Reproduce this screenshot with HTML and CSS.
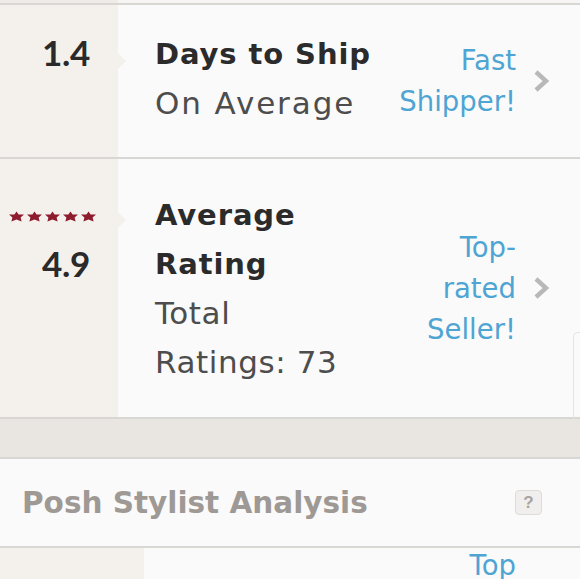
FILE: index.html
```html
<!DOCTYPE html>
<html>
<head>
<meta charset="utf-8">
<link rel="stylesheet" href="styles.css">
</head>
<body>
<div class="page">
  <div class="topstrip"><div class="topstrip-left"></div></div>

  <div class="row row-ship">
    <div class="left">
      <div class="big">1.4</div>
    </div>
    <div class="main">
      <div class="title">Days to Ship</div>
      <div class="sub sub-wide">On Average</div>
    </div>
    <div class="right">
      <div class="badge">Fast<br>Shipper!</div>
      <svg class="chev" width="18" height="24" viewBox="0 0 18 24"><polyline points="3,3 13,12 3,21" fill="none" stroke="#b8b8b8" stroke-width="4.4"/></svg>
    </div>
  </div>

  <div class="row row-rating">
    <div class="left">
      <div class="stars">
        <svg width="88" height="11" viewBox="0 0 88 11">
          <g fill="#8e1b2e">
            <polygon points="7.5,0.5 9.6,3.6 15,3.6 11.6,6.4 12.6,10.5 7.5,8.6 2.4,10.5 3.4,6.4 0,3.6 5.4,3.6"/>
            <polygon transform="translate(18,0)" points="7.5,0.5 9.6,3.6 15,3.6 11.6,6.4 12.6,10.5 7.5,8.6 2.4,10.5 3.4,6.4 0,3.6 5.4,3.6"/>
            <polygon transform="translate(36,0)" points="7.5,0.5 9.6,3.6 15,3.6 11.6,6.4 12.6,10.5 7.5,8.6 2.4,10.5 3.4,6.4 0,3.6 5.4,3.6"/>
            <polygon transform="translate(54,0)" points="7.5,0.5 9.6,3.6 15,3.6 11.6,6.4 12.6,10.5 7.5,8.6 2.4,10.5 3.4,6.4 0,3.6 5.4,3.6"/>
            <polygon transform="translate(72,0)" points="7.5,0.5 9.6,3.6 15,3.6 11.6,6.4 12.6,10.5 7.5,8.6 2.4,10.5 3.4,6.4 0,3.6 5.4,3.6"/>
          </g>
        </svg>
      </div>
      <div class="big">4.9</div>
    </div>
    <div class="main">
      <div class="title">Average<br>Rating</div>
      <div class="sub">Total<br>Ratings: 73</div>
    </div>
    <div class="right">
      <div class="badge">Top-<br>rated<br>Seller!</div>
      <svg class="chev" width="18" height="24" viewBox="0 0 18 24"><polyline points="3,3 13,12 3,21" fill="none" stroke="#b8b8b8" stroke-width="4.4"/></svg>
    </div>
  </div>

  <div class="band"></div>

  <div class="section-head">
    <div class="section-title">Posh Stylist Analysis</div>
    <div class="help">?</div>
  </div>

  <div class="row row-next">
    <div class="left left-wide"></div>
    <div class="main"></div>
    <div class="right">
      <div class="badge">Top</div>
      <div class="chev-space"></div>
    </div>
  </div>

  <div class="edge-line"></div>
</div>
</body>
</html>
```

FILE: styles.css
```css
* { box-sizing: border-box; }
html, body { margin: 0; padding: 0; }
body {
  background: #fafafa;
  font-family: "DejaVu Sans", "Liberation Sans", sans-serif;
  width: 580px;
  height: 579px;
  overflow: hidden;
}
.page {
  position: relative;
  width: 580px;
  height: 579px;
  overflow: hidden;
}
.topstrip {
  height: 5px;
  background: #f6f5f3;
  border-bottom: 2px solid #d9d7d4;
}
.topstrip-left { width: 118px; height: 3px; background: #efece7; }

.row {
  display: grid;
  grid-template-columns: 118px 1fr auto;
  border-bottom: 2px solid #d9d7d4;
}
.left {
  background: #f4f1ec;
  position: relative;
  text-align: right;
  padding-right: 28px;
}
.left::after {
  content: "";
  position: absolute;
  right: -8px;
  width: 0;
  height: 0;
  border-top: 8px solid transparent;
  border-bottom: 8px solid transparent;
  border-left: 8px solid #f4f1ec;
}
.big {
  font-family: "Lato", "Liberation Sans", sans-serif;
  font-size: 35px;
  font-weight: 700;
  line-height: 49px;
  color: #2a2a2a;
  letter-spacing: -0.3px;
}
.main {
  padding-left: 37px;
}
.title {
  font-size: 29px;
  font-weight: 700;
  line-height: 49px;
  color: #2b2b2b;
  letter-spacing: 0.9px;
}
.sub {
  font-size: 31px;
  font-weight: 400;
  line-height: 49px;
  color: #4d4d4d;
  letter-spacing: 0.6px;
}
.sub-wide { letter-spacing: 1.9px; }
.right {
  display: flex;
  align-items: center;
  padding-right: 29px;
}
.badge {
  font-size: 27.5px;
  line-height: 41px;
  color: #4ea5d3;
  text-align: right;
}
.chev { margin-left: 17px; display: block; }
.chev-space { width: 35px; }

.row-ship { height: 154px; }
.row-ship .left { padding-top: 23px; }
.row-ship .left::after { top: 48px; }
.row-ship .main { padding-top: 25px; }

.row-rating { height: 260px; }
.row-rating .left { padding-top: 48px; }
.row-rating .left::after { top: 53px; }
.row-rating .stars { height: 32px; margin-right: -7px; }
.row-rating .stars svg { display: inline-block; }
.row-rating .main { padding-top: 32px; }

.band {
  height: 40px;
  background: #e9e6e2;
  border-bottom: 2px solid #d9d7d4;
}

.section-head {
  height: 89px;
  display: flex;
  align-items: center;
  justify-content: space-between;
  padding: 0 38px 0 22px;
  border-bottom: 2px solid #d9d7d4;
}
.section-title {
  font-size: 29.5px;
  font-weight: 700;
  color: #9e9994;
}
.help {
  width: 27px;
  height: 25px;
  border: 1px solid #dedcd9;
  border-radius: 4px;
  background: #f0efed;
  color: #a6a4a1;
  font-size: 17px;
  font-weight: 700;
  line-height: 23px;
  text-align: center;
  font-family: "Liberation Sans", sans-serif;
}

.row-next {
  height: 60px;
  grid-template-columns: 144px 1fr auto;
  border-bottom: none;
}
.row-next .left::after { display: none; }
.row-next .right { align-items: flex-start; }
.row-next .badge { margin-top: -3px; }

.edge-line {
  position: absolute;
  left: 573px;
  top: 332px;
  width: 10px;
  height: 86px;
  border-left: 1px solid #e6e5e3;
  border-top: 1px solid #e6e5e3;
  border-top-left-radius: 5px;
}
```
